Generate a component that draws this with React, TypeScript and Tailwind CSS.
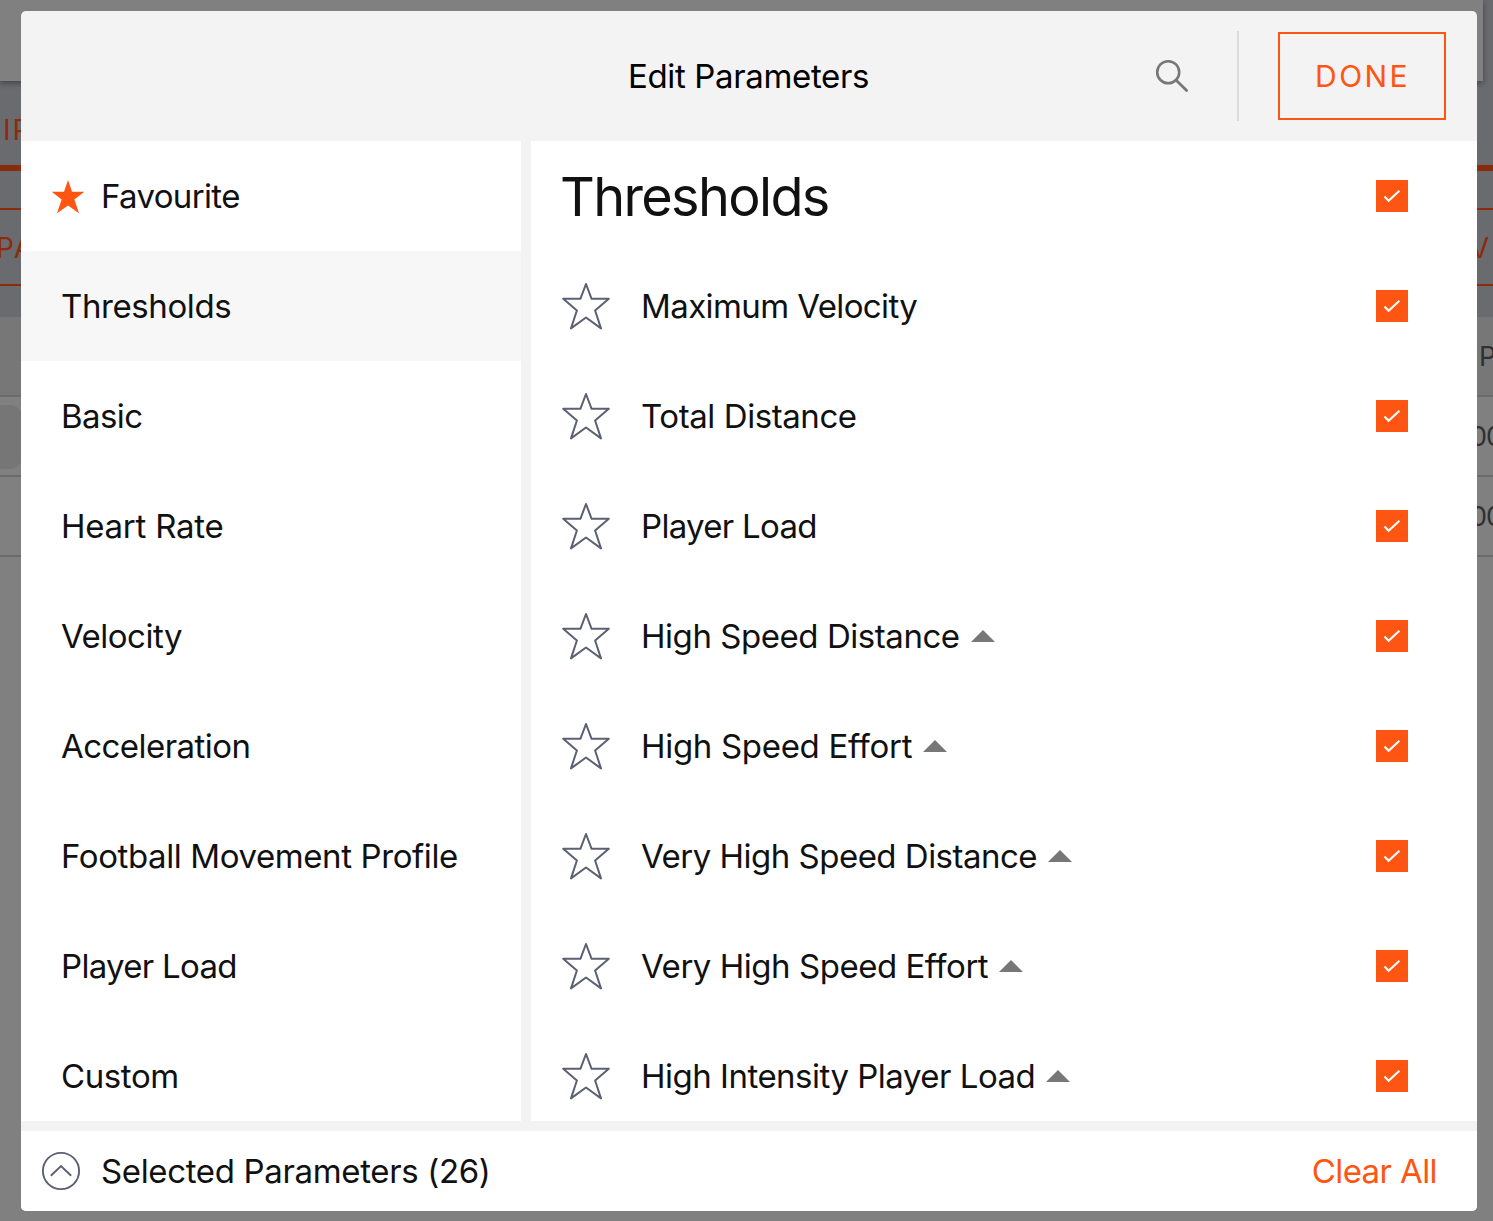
import React, { useState } from 'react';
import { clsx } from 'clsx';

interface Category {
  name: string;
  spacing: string;
}

interface Parameter {
  name: string;
  spacing: string;
  hasBand?: boolean;
}

const CATEGORIES: Category[] = [
  { name: 'Thresholds', spacing: 'tracking-[-0.4px]' },
  { name: 'Basic', spacing: 'tracking-[-0.6px]' },
  { name: 'Heart Rate', spacing: 'tracking-[-0.25px]' },
  { name: 'Velocity', spacing: 'tracking-[-0.5px]' },
  { name: 'Acceleration', spacing: 'tracking-[-0.55px]' },
  { name: 'Football Movement Profile', spacing: 'tracking-[-0.4px]' },
  { name: 'Player Load', spacing: 'tracking-[-0.7px]' },
  { name: 'Custom', spacing: 'tracking-[-0.4px]' },
];

const PARAMETERS: Parameter[] = [
  { name: 'Maximum Velocity', spacing: 'tracking-[-0.6px]' },
  { name: 'Total Distance', spacing: 'tracking-[-0.42px]' },
  { name: 'Player Load', spacing: 'tracking-[-0.7px]' },
  { name: 'High Speed Distance', spacing: 'tracking-[-0.45px]', hasBand: true },
  { name: 'High Speed Effort', spacing: 'tracking-[-0.31px]', hasBand: true },
  { name: 'Very High Speed Distance', spacing: 'tracking-[-0.51px]', hasBand: true },
  { name: 'Very High Speed Effort', spacing: 'tracking-[-0.47px]', hasBand: true },
  { name: 'High Intensity Player Load', spacing: 'tracking-[-0.5px]', hasBand: true },
];

const StarOutline = () => (
  <svg width="48" height="48" viewBox="0 0 48 48" fill="none" stroke="#5b6172" strokeWidth="2" strokeLinejoin="round" className="shrink-0">
    <path d="M24 2 29.6 16.8H46.8L33.1 28.5 39 46.4 24 35.5 9 46.4 14.9 28.5 1.2 16.8H18.4Z" />
  </svg>
);

const StarFilled = () => (
  <svg width="34" height="34" viewBox="0 0 34 34" fill="#ff5512" className="mt-0.5 shrink-0">
    <path d="M17 0 21 11.7H33.3L23.4 19.4 28 33.2 17 25.4 6 33.2 10.6 19.4.7 11.7H13Z" />
  </svg>
);

const Checkbox: React.FC<{ checked: boolean; onToggle: () => void }> = ({ checked, onToggle }) => (
  <button
    role="checkbox"
    aria-checked={checked}
    onClick={onToggle}
    className={clsx('size-8 shrink-0', checked ? 'bg-[#ff5512]' : 'border-2 border-[#777]')}
  >
    {checked && (
      <svg width="32" height="32" viewBox="0 0 32 32" fill="none" stroke="white" strokeWidth="2.2">
        <path d="M8.5 16.5 12.6 20.7 23.4 10.8" />
      </svg>
    )}
  </button>
);

/* Dimmed page that sits behind the dialog */
const Backdrop = () => (
  <div className="flex h-full flex-col bg-[#808080]">
    <div className="flex h-[317px] flex-col bg-[#6a6b6f]">
      <div className="mr-[10px] h-[81px] shrink-0 bg-[#808080] shadow-[0_2px_6px_rgba(0,0,0,0.4)]" />
      <div className="flex h-[90px] items-center border-b-[6px] border-[#8a2c0c] pl-[3px] text-[28px] tracking-[2px] text-[#8a2c0c]">
        <span className="pt-[13px]">IP</span>
      </div>
      <div className="mt-[37px] flex h-[78px] items-center justify-between overflow-hidden border-y-2 border-[#8a2c0c] text-[28px] tracking-[2px] text-[#8a2c0c]">
        <span className="-ml-[4px] pt-0.5">PA</span>
        <span className="w-[23px] pt-0.5">V</span>
      </div>
    </div>
    <div className="flex h-20 items-center justify-end border-b-2 border-[#6b6b6b] bg-[#777] text-[27px] text-[#303030]">
      <span className="w-[14px] pt-[3px]">P</span>
    </div>
    <div className="flex h-20 items-center justify-between border-b-2 border-[#6b6b6b] text-[27px] text-[#303030]">
      <div className="mt-0.5 h-16 w-[22px] rounded-r-xl bg-[#767676]" />
      <span className="w-[23px] pt-0.5 tracking-[-1px]">00</span>
    </div>
    <div className="flex h-20 items-center justify-end border-b-2 border-[#6b6b6b] text-[27px] text-[#303030]">
      <span className="w-[23px] pt-0.5 tracking-[-1px]">00</span>
    </div>
  </div>
);

export default function App() {
  const [selected, setSelected] = useState('Thresholds');
  const [unchecked, setUnchecked] = useState<string[]>([]);

  const toggle = (name: string) => {
    setUnchecked(unchecked.includes(name) ? unchecked.filter(n => n !== name) : [...unchecked, name]);
  };

  const toggleAll = () => {
    setUnchecked(unchecked.length ? [] : PARAMETERS.map(p => p.name));
  };

  return (
    <div className="relative h-[1221px] w-[1493px] overflow-hidden font-['Inter',sans-serif] text-[33px] text-[#111]">
      <Backdrop />

      <div className="absolute inset-0 flex pt-[11px] pr-4 pb-[10px] pl-[21px]">
        <div className="flex flex-1 flex-col overflow-hidden rounded-[5px] bg-[#f3f3f3]">
          {/* Header */}
          <header className="flex h-[130px] shrink-0 items-center">
            <div className="w-[504px]" />
            <h1 className="flex-1 pt-0.5 pl-[103px] tracking-[-0.35px] whitespace-nowrap text-black">Edit Parameters</h1>
            <button className="mr-[48px]">
              <svg width="34" height="34" viewBox="0 0 34 34" fill="none" stroke="#777" strokeWidth="2.6" strokeLinecap="round">
                <circle cx="13.2" cy="13.2" r="11" />
                <path d="M21.2 21.2 31.6 31.6" strokeWidth="2.8" />
              </svg>
            </button>
            <div className="mr-[39px] h-[90px] w-0.5 bg-[#dcdcdc]" />
            <button className="mr-[31px] h-[88px] w-[168px] border-2 border-[#ff5512] pt-px pl-px text-[30px] tracking-[2.4px] text-[#ff5512]">
              DONE
            </button>
          </header>

          {/* Body */}
          <div className="flex h-[980px] shrink-0 gap-[10px] overflow-hidden">
            <nav className="w-[500px] bg-white">
              <div className="flex h-[110px] items-center gap-4 pl-[30px]">
                <StarFilled />
                <span className="pt-0.5 tracking-[-0.65px]">Favourite</span>
              </div>
              {CATEGORIES.map(c => (
                <div
                  key={c.name}
                  onClick={() => setSelected(c.name)}
                  className={clsx('flex h-[110px] items-center pl-10', selected === c.name && 'bg-[#f7f7f7]')}
                >
                  <span className={clsx('pt-0.5', c.spacing)}>{c.name}</span>
                </div>
              ))}
            </nav>

            <section className="flex-1 bg-white">
              <div className="flex h-[110px] items-center justify-between pr-[69px] pl-[29px]">
                <h2 className="text-[54px] tracking-[-1.65px]">{selected}</h2>
                <Checkbox checked={!unchecked.length} onToggle={toggleAll} />
              </div>
              {PARAMETERS.map(p => (
                <div key={p.name} className="flex h-[110px] items-center pr-[69px] pl-[31px]">
                  <StarOutline />
                  <span className={clsx('ml-[31px] pt-0.5', p.spacing)}>{p.name}</span>
                  {p.hasBand && (
                    <svg width="24" height="12" viewBox="0 0 24 12" fill="#777" className="ml-[11px]">
                      <path d="M12 0 24 12H0Z" />
                    </svg>
                  )}
                  <div className="ml-auto flex">
                    <Checkbox checked={!unchecked.includes(p.name)} onToggle={() => toggle(p.name)} />
                  </div>
                </div>
              ))}
            </section>
          </div>

          {/* Footer */}
          <footer className="mt-[10px] flex h-20 shrink-0 items-center bg-white pr-10 pl-5">
            <svg width="40" height="40" viewBox="0 0 40 40" fill="none" stroke="#5b6172" strokeWidth="1.9">
              <circle cx="20" cy="20" r="18.1" />
              <path d="M9.8 24.8 20 15 30.2 24.8" />
            </svg>
            <span className="ml-5 pt-0.5 tracking-[-0.35px]">Selected Parameters (26)</span>
            <button className="ml-auto pt-0.5 tracking-[-0.6px] text-[#ff5512]">Clear All</button>
          </footer>
        </div>
      </div>
    </div>
  );
}
